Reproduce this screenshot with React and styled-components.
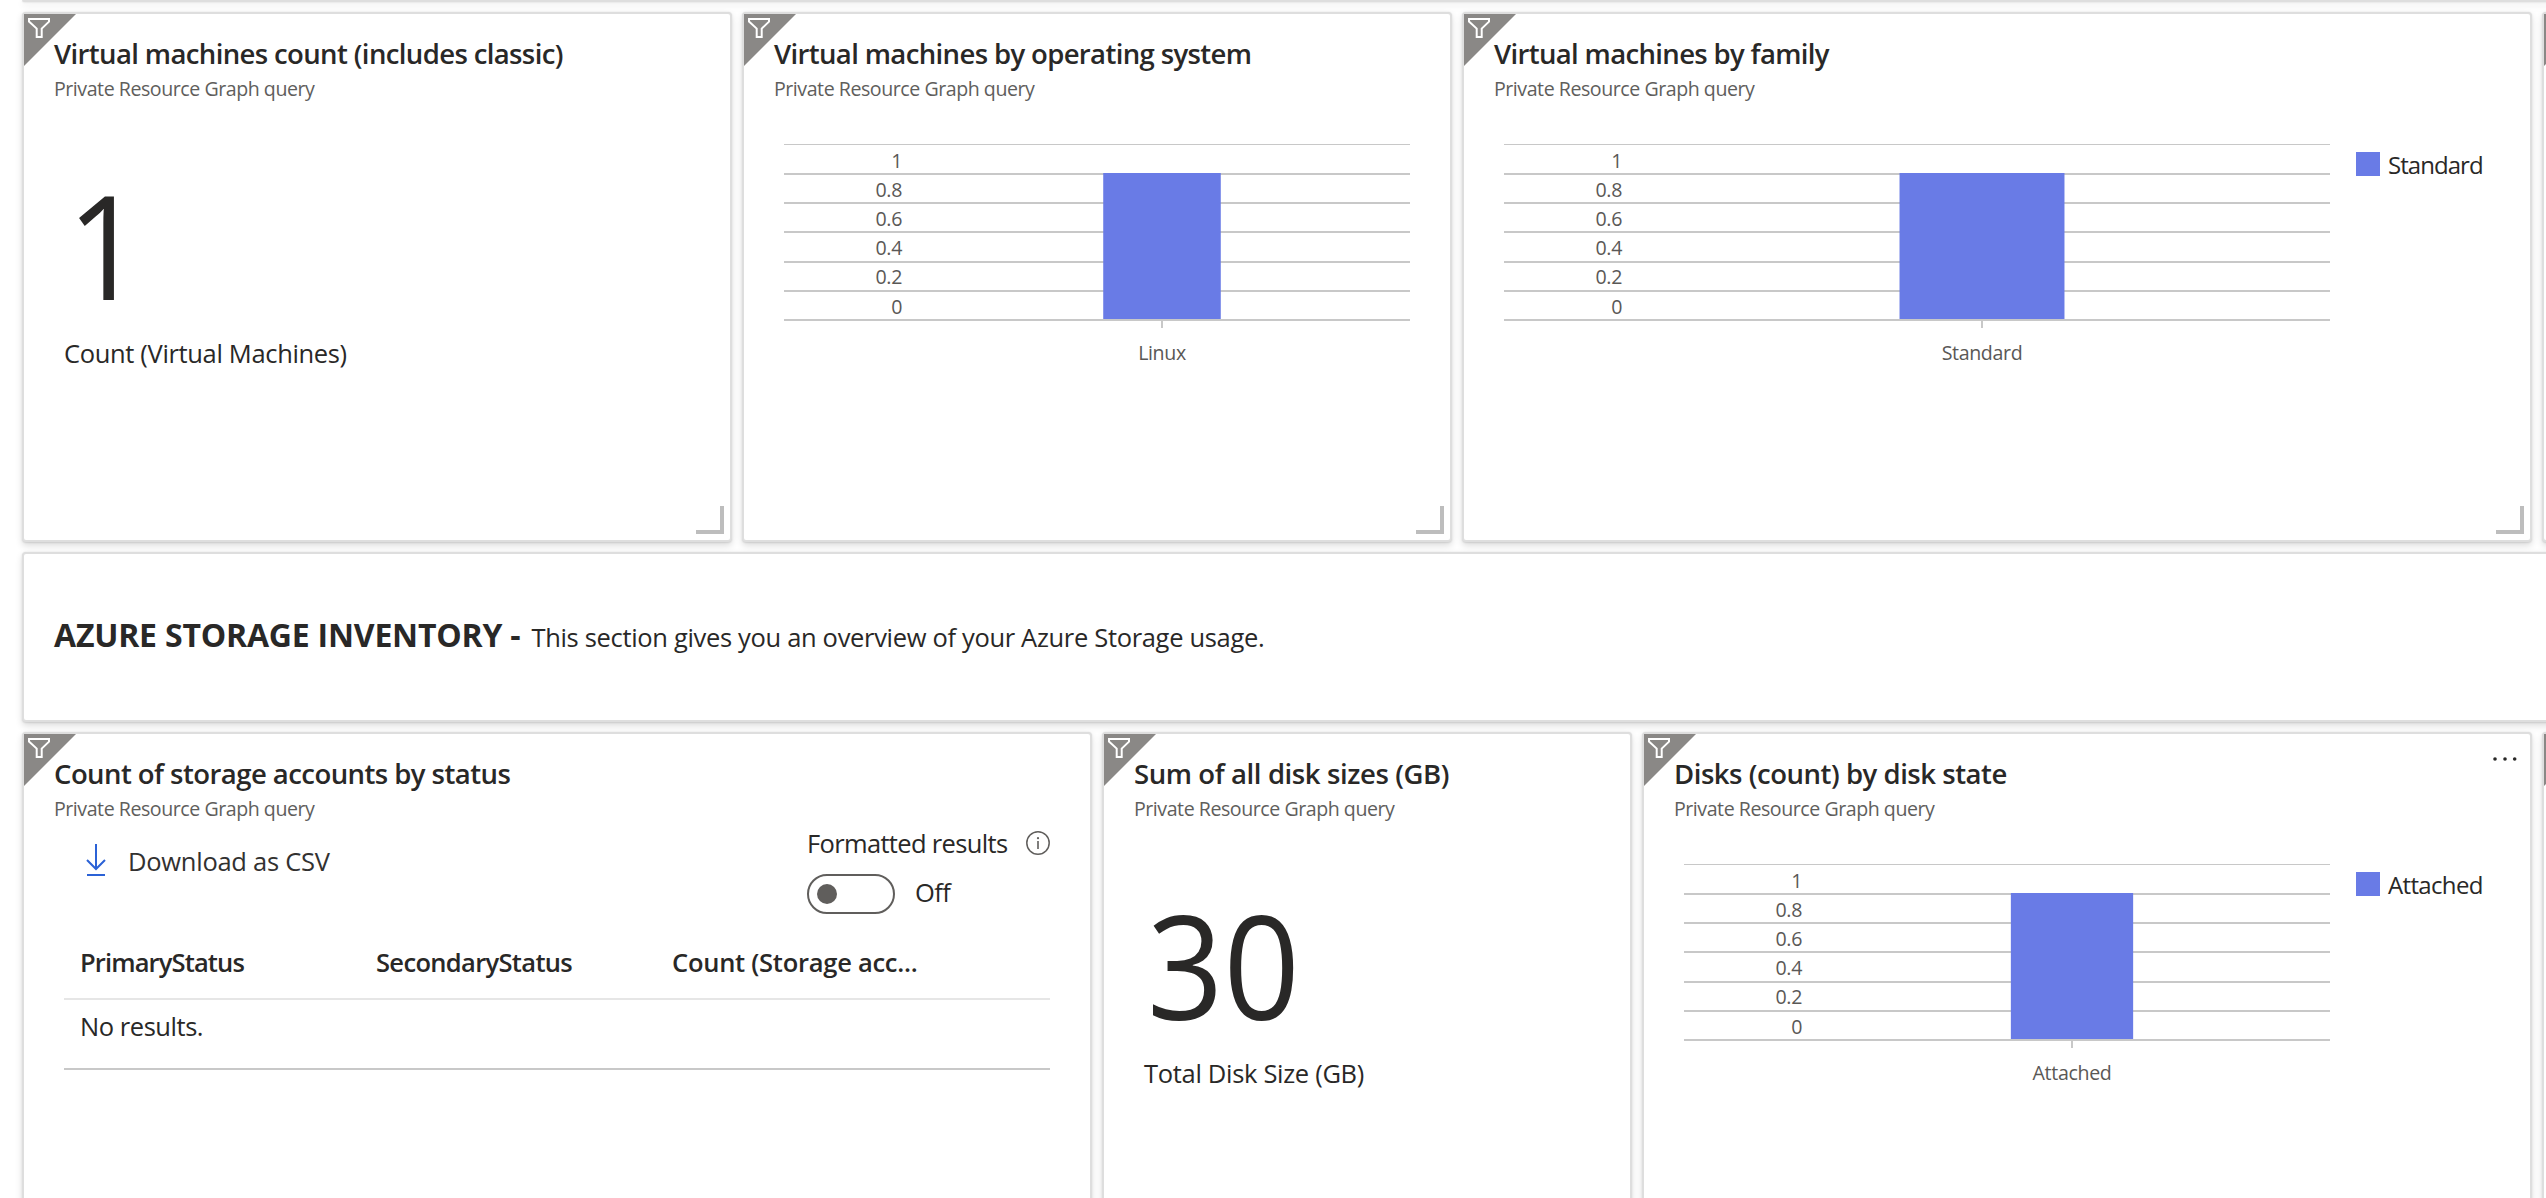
import React from "react";
import styled, { createGlobalStyle } from "styled-components";

const GlobalStyle = createGlobalStyle`
  *, *::before, *::after { box-sizing: border-box; }
  body {
    margin: 0;
    background: #ffffff;
    color: #292827;
    font-family: "Open Sans", "Noto Sans", sans-serif;
    overflow: hidden;
  }
`;

const Board = styled.main`
  display: flex;
  flex-direction: column;
  gap: 10px;
  width: 2546px;
  height: 1198px;
  padding-left: 22px;
  overflow: hidden;
`;

const TileRow = styled.div`
  display: flex;
  flex: none;
  gap: 10px;
`;

const Tile = styled.section`
  position: relative;
  flex: none;
  width: ${(p) => p.$cols * 180 - 10}px;
  height: 530px;
  background: #fff;
  border: 2px solid #dedede;
  border-radius: 4px;
  box-shadow: 0 3.2px 7.2px rgba(0, 0, 0, 0.13), 0 0.6px 1.8px rgba(0, 0, 0, 0.11);
`;

const PreviousTile = styled(Tile)`
  height: 2px;
  border-width: 0 0 2px;
  border-radius: 0 0 0 4px;
`;

const BannerTile = styled(Tile)`
  height: 170px;
  padding: 59px 30px 0;
`;

const BannerText = styled.p`
  margin: 0;
  font-size: 25.5px;
  line-height: 44px;
  letter-spacing: -0.326px;
  white-space: nowrap;
`;

const BannerHeading = styled.strong`
  margin-right: 11px;
  font-size: 32px;
  font-weight: 700;
  letter-spacing: -0.2px;
`;

const FilterCorner = styled.div`
  position: absolute;
  top: 0;
  left: 0;
  width: 52px;
  height: 52px;
  background: #8a8886;
  clip-path: polygon(0 0, 100% 0, 0 100%);

  svg { display: block; }
`;

const MoreButton = styled.button`
  position: absolute;
  top: 18px;
  right: 12px;
  width: 28px;
  height: 14px;
  padding: 0;
  border: 0;
  background: none;

  svg { display: block; }
`;

const ResizeHandle = styled.span`
  position: absolute;
  right: 6px;
  bottom: 6px;
  width: 28px;
  height: 28px;
  border: solid #bdbdbd;
  border-width: 0 4px 4px 0;
`;

const TileHeader = styled.header`
  padding: 22px 30px 0;
`;

const TileTitle = styled.h2`
  margin: 0 0 3px;
  font-size: 27.5px;
  font-weight: 600;
  line-height: 36px;
  letter-spacing: ${(p) => p.$tracking}px;
  white-space: nowrap;
`;

const TileSubtitle = styled.p`
  margin: 0;
  color: #605e5c;
  font-size: 19.6px;
  line-height: 28px;
  letter-spacing: -0.46px;
`;

const MetricBody = styled.div`
  padding: 61px 40px 0;
`;

const MetricValue = styled.div`
  width: max-content;
  margin: 0 0 11px 3px;
  font-size: 145px;
  line-height: 160px;
  transform: scaleX(0.922);
  transform-origin: left center;
`;

const Text = styled.span`
  display: block;
  font-size: 25.5px;
  font-weight: ${(p) => p.$weight || 400};
  line-height: 36px;
  letter-spacing: ${(p) => p.$tracking || 0}px;
  white-space: nowrap;
`;

const ChartBody = styled.div`
  display: flex;
  gap: 26px;
  padding: 41px 0 0 40px;
`;

const ChartSvg = styled.svg`
  display: block;
  flex: none;

  text {
    fill: #5a5856;
    font-family: "Open Sans", "Noto Sans", sans-serif;
    font-size: 19.6px;
    letter-spacing: -0.35px;
  }
`;

const Legend = styled.div`
  display: flex;
  align-items: center;
  gap: 8px;
  height: 24px;
  margin-top: 8px;
`;

const LegendSwatch = styled.span`
  width: 24px;
  height: 24px;
  background: #697be6;
`;

const LegendLabel = styled.span`
  padding-top: 2px;
  font-size: 24px;
  line-height: 26px;
  letter-spacing: ${(p) => p.$tracking}px;
`;

const StorageBody = styled.div`
  padding: 2px 40px 0;
`;

const Toolbar = styled.div`
  display: flex;
  align-items: flex-start;
  justify-content: space-between;
`;

const DownloadButton = styled.button`
  display: flex;
  align-items: center;
  gap: 22px;
  margin: 18px 0 0 22px;
  padding: 0;
  border: 0;
  background: none;
  color: #323130;
  font: inherit;
`;

const FormatOptions = styled.div`
  width: 243px;
`;

const FormatLabelRow = styled.div`
  display: flex;
  align-items: center;
  justify-content: space-between;
`;

const ToggleRow = styled.div`
  display: flex;
  align-items: center;
  gap: 20px;
  margin-top: 13px;
`;

const ToggleTrack = styled.span`
  display: flex;
  align-items: center;
  width: 88px;
  height: 40px;
  padding: 0 8px;
  border: 2px solid #605e5c;
  border-radius: 20px;
`;

const ToggleKnob = styled.span`
  width: 20px;
  height: 20px;
  border-radius: 50%;
  background: #605e5c;
`;

const ToggleState = styled(Text)`
  padding-bottom: 4px;
`;

const TableHead = styled.div`
  display: grid;
  grid-template-columns: repeat(3, 296px);
  padding: 30px 0 18px;
  border-bottom: 2px solid #e6e6e6;
`;

const TableCell = styled.div`
  padding-left: 16px;
`;

const TableEmptyRow = styled.div`
  padding: 8px 0 24px 16px;
  border-bottom: 2px solid #c8c8c8;
`;

function FilterBadge() {
  return (
    <FilterCorner>
      <svg width="30" height="30" viewBox="0 0 30 30" fill="none" stroke="#fff" strokeWidth="2">
        <path d="M5 5H25V7.6L17.7 14.6V23H12.7V14.6L5 7.6Z" />
      </svg>
    </FilterCorner>
  );
}

function DownloadIcon() {
  return (
    <svg width="20" height="34" viewBox="0 0 20 34" fill="none" stroke="#2b62d6" strokeWidth="2">
      <path d="M10 0V25M1 16L10 25L19 16M1 31H19" />
    </svg>
  );
}

function InfoIcon() {
  return (
    <svg width="24" height="24" viewBox="0 0 24 24" fill="none" stroke="#605e5c">
      <circle cx="12" cy="12" r="11.2" strokeWidth="1.5" />
      <path d="M12 10V18" strokeWidth="1.6" />
      <circle cx="12" cy="7.2" r="1.1" fill="#605e5c" stroke="none" />
    </svg>
  );
}

function QueryTile({ cols, title, tracking, resizable, more, children }) {
  return (
    <Tile $cols={cols}>
      <FilterBadge />
      {title && (
        <TileHeader>
          <TileTitle $tracking={tracking}>{title}</TileTitle>
          <TileSubtitle>Private Resource Graph query</TileSubtitle>
        </TileHeader>
      )}
      {children}
      {more && (
        <MoreButton aria-label="More">
          <svg width="28" height="14" viewBox="0 0 28 14" fill="#292827">
            <circle cx="5" cy="7" r="1.8" />
            <circle cx="15" cy="7" r="1.8" />
            <circle cx="24.7" cy="7" r="1.8" />
          </svg>
        </MoreButton>
      )}
      {resizable && <ResizeHandle />}
    </Tile>
  );
}

function Metric({ value, label, tracking }) {
  return (
    <MetricBody>
      <MetricValue>{value}</MetricValue>
      <Text $tracking={tracking}>{label}</Text>
    </MetricBody>
  );
}

const GRID_LINES = [29, 58, 87, 117, 146, 175];
const AXIS = [["1", 24], ["0.8", 53], ["0.6", 82], ["0.4", 111], ["0.2", 140], ["0", 170]];
const AXIS_WIDTH = 130;

function BarChart({ width, category, legend, legendTracking }) {
  const plot = width - AXIS_WIDTH;
  const center = AXIS_WIDTH + plot / 2;
  const bar = plot * 0.237;
  return (
    <ChartBody>
      <ChartSvg width={width} height="230" viewBox={`0 0 ${width} 230`}>
        <rect x="0" y="0" width={width} height="1" fill="#c8c8c8" />
        {GRID_LINES.map((y) => (
          <rect key={y} x="0" y={y} width={width} height="2" fill="#c8c8c8" />
        ))}
        {AXIS.map(([label, y]) => (
          <text key={label} x="118" y={y} textAnchor="end">{label}</text>
        ))}
        <rect x={center - bar / 2} y="29" width={bar} height="146" fill="#697be6" />
        <rect x={center - 1} y="177" width="2" height="7" fill="#c8c8c8" />
        <text x={center} y="216" textAnchor="middle">{category}</text>
      </ChartSvg>
      {legend && (
        <Legend>
          <LegendSwatch />
          <LegendLabel $tracking={legendTracking}>{legend}</LegendLabel>
        </Legend>
      )}
    </ChartBody>
  );
}

function StorageTable() {
  return (
    <StorageBody>
      <Toolbar>
        <DownloadButton>
          <DownloadIcon />
          <Text $tracking={-0.26}>Download as CSV</Text>
        </DownloadButton>
        <FormatOptions>
          <FormatLabelRow>
            <Text $tracking={-0.66}>Formatted results</Text>
            <InfoIcon />
          </FormatLabelRow>
          <ToggleRow>
            <ToggleTrack>
              <ToggleKnob />
            </ToggleTrack>
            <ToggleState $tracking={-0.6}>Off</ToggleState>
          </ToggleRow>
        </FormatOptions>
      </Toolbar>
      <TableHead>
        <TableCell><Text $weight={600} $tracking={-0.86}>PrimaryStatus</Text></TableCell>
        <TableCell><Text $weight={600} $tracking={-0.665}>SecondaryStatus</Text></TableCell>
        <TableCell><Text $weight={600} $tracking={-0.26}>Count (Storage acc...</Text></TableCell>
      </TableHead>
      <TableEmptyRow>
        <Text $tracking={-0.45}>No results.</Text>
      </TableEmptyRow>
    </StorageBody>
  );
}

export default function App() {
  return (
    <>
      <GlobalStyle />
      <Board>
        <TileRow>
          <PreviousTile $cols={16} />
        </TileRow>
        <TileRow>
          <QueryTile cols={4} title="Virtual machines count (includes classic)" tracking={-0.62} resizable>
            <Metric value="1" label="Count (Virtual Machines)" tracking={-0.34} />
          </QueryTile>
          <QueryTile cols={4} title="Virtual machines by operating system" tracking={-0.63} resizable>
            <BarChart width={626} category="Linux" />
          </QueryTile>
          <QueryTile cols={6} title="Virtual machines by family" tracking={-0.65} resizable>
            <BarChart width={826} category="Standard" legend="Standard" legendTracking={-0.95} />
          </QueryTile>
          <QueryTile cols={4} />
        </TileRow>
        <TileRow>
          <BannerTile $cols={16}>
            <BannerText>
              <BannerHeading>AZURE STORAGE INVENTORY -</BannerHeading>
              This section gives you an overview of your Azure Storage usage.
            </BannerText>
          </BannerTile>
        </TileRow>
        <TileRow>
          <QueryTile cols={6} title="Count of storage accounts by status" tracking={-0.55}>
            <StorageTable />
          </QueryTile>
          <QueryTile cols={3} title="Sum of all disk sizes (GB)" tracking={-0.4}>
            <Metric value="30" label="Total Disk Size (GB)" tracking={-0.31} />
          </QueryTile>
          <QueryTile cols={5} title="Disks (count) by disk state" tracking={-0.46} more>
            <BarChart width={646} category="Attached" legend="Attached" legendTracking={-0.65} />
          </QueryTile>
          <QueryTile cols={4} />
        </TileRow>
      </Board>
    </>
  );
}
